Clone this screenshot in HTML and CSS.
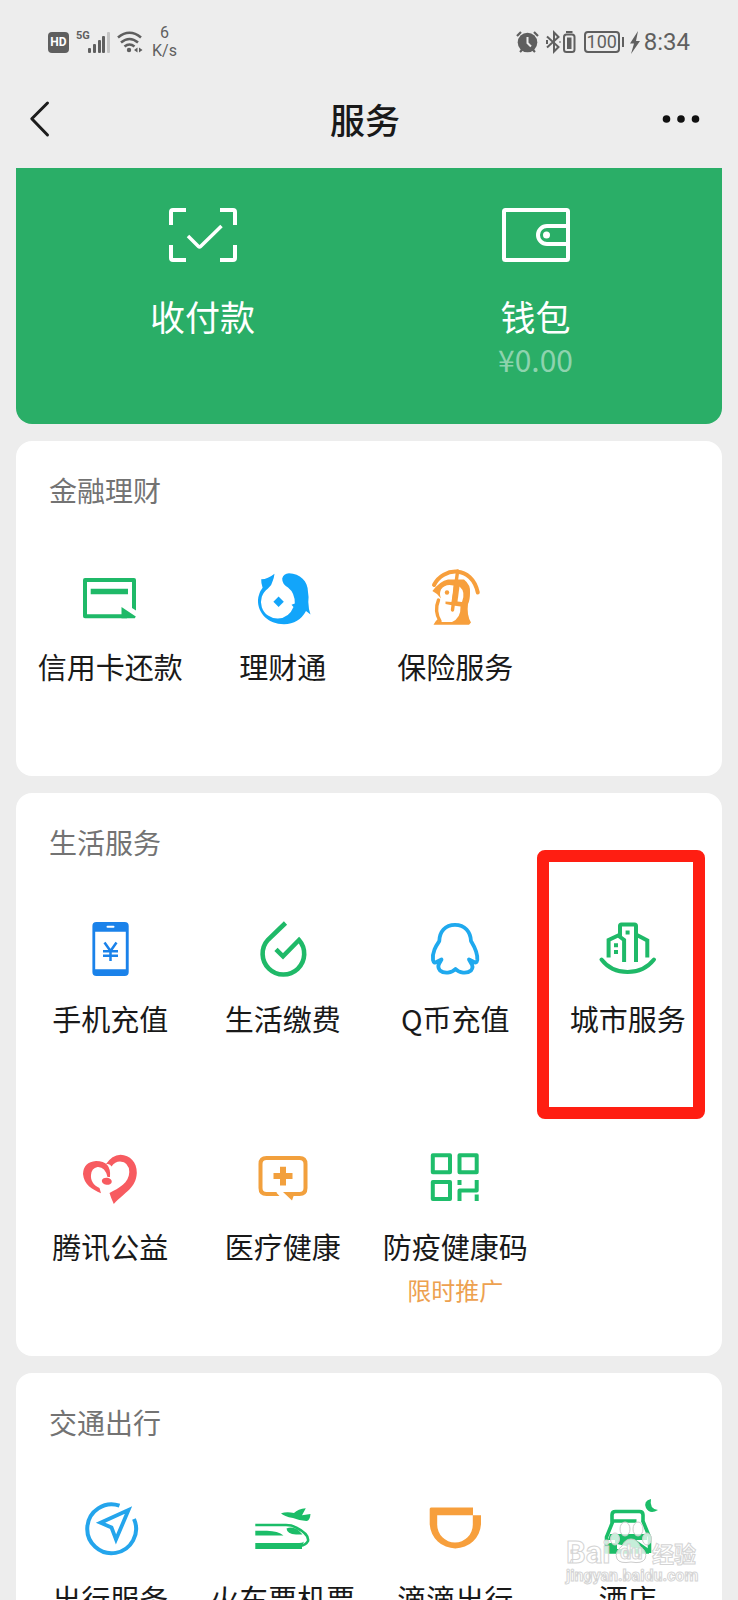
FILE: index.html
```html
<!DOCTYPE html>
<html lang="zh-CN">
<head>
<meta charset="utf-8">
<meta name="viewport" content="width=device-width, initial-scale=1">
<title>服务</title>
<link rel="stylesheet" href="styles.css">
</head>
<body>
<div class="app">
  <div class="status">
    <div class="status-group">
      <span class="hd">HD</span>
      <span class="signal">
        <span class="net">5G</span>
        <svg width="23" height="22" viewBox="0 0 23 22" fill="#5f5f5f"><rect x="0" y="17" width="3" height="5" rx="1"/><rect x="5" y="13" width="3" height="9" rx="1"/><rect x="10" y="9" width="3" height="13" rx="1"/><rect x="14" y="5" width="3" height="17" rx="1"/><rect x="19" y="1" width="3" height="21" rx="1" fill="#c4c4c4"/></svg>
      </span>
      <svg class="wifi" width="26" height="22" viewBox="0 0 26 22" fill="none" stroke="#5f5f5f" stroke-width="2.6"><path d="M1 6.5Q12.500-3 24 6.500M4 11.500q8.500-7 17 0M7.500 15.500q5-4 10 0"/><circle cx="12" cy="19" r="2.200" fill="#5f5f5f" stroke="none"/><path d="M20.500 16.500v5l-3.500-2.500zM22 16.500v5l3.500-2.500z" fill="#5f5f5f" stroke="none"/></svg>
      <span class="speed"><span>6</span><span>K/s</span></span>
    </div>
    <div class="status-group">
      <svg width="23" height="22" viewBox="0 0 23 22"><circle cx="11.500" cy="11.500" r="9.800" fill="#5f5f5f"/><path d="M1 5l4-4M22 5l-4-4M4 21l3-3M19 21l-3-3" stroke="#5f5f5f" stroke-width="2.200"/><path d="M11.500 6v6l3.500 3.500" stroke="#ededed" stroke-width="2" fill="none"/></svg>
      <svg class="bluetooth" width="30" height="22" viewBox="0 0 30 22" fill="none" stroke="#5f5f5f" stroke-width="2"><path d="M1 5.500L12.500 16 8 20.500V1.500L12.500 6 1 16.500M1 9v4M14 10.500v1"/><rect x="18" y="3.500" width="10.500" height="17.500" rx="2.500"/><path d="M20 1h6.500"/><path d="M21 6.500h4.500v11.500H21z" fill="#5f5f5f" stroke="none"/></svg>
      <span class="battery">100</span>
      <svg class="bolt" width="10" height="23" viewBox="0 0 10 23" fill="#5f5f5f"><path d="M8 0L0 12.500h4L1 23 10 10H6z"/></svg>
      <span class="clock">8:34</span>
    </div>
  </div>

  <header class="nav">
    <button class="nav-back" aria-label="返回"><svg width="20" height="36" viewBox="0 0 20 36" fill="none" stroke="#1c1c1c" stroke-width="3" stroke-linecap="round" stroke-linejoin="round"><path d="M17.500 2L1.800 17.700l15.700 16.300"/></svg></button>
    <h1 class="nav-title">服务</h1>
    <button class="nav-more" aria-label="更多"><svg width="38" height="10" viewBox="0 0 38 10" fill="#111"><circle cx="4.500" cy="5" r="3.800"/><circle cx="19" cy="5" r="3.800"/><circle cx="33.500" cy="5" r="3.800"/></svg></button>
  </header>

  <main class="content">
    <section class="pay">
      <a class="pay-item" href="#pay">
        <svg width="70" height="56" viewBox="0 0 70 56" fill="none" stroke="#fff" stroke-width="4"><path d="M3 18V5q0-2 2-2h13M52 3h13q2 0 2 2v13M3 38v13q0 2 2 2h13M52 53h13q2 0 2-2V38"/><path d="M20 29l10.500 10.500q1 1 2 0L53.500 19" stroke-width="3.500"/></svg>
        <span class="pay-label">收付款</span>
      </a>
      <a class="pay-item" href="#wallet">
        <svg width="70" height="56" viewBox="0 0 70 56" fill="none" stroke="#fff" stroke-width="4"><rect x="3" y="3" width="64" height="50" rx="1.500"/><path d="M66 19H46a9 9 0 0 0 0 18h20"/><circle cx="45.500" cy="28" r="3.500" fill="#fff" stroke="none"/></svg>
        <span class="pay-label">钱包</span>
        <span class="pay-amount">¥0.00</span>
      </a>
    </section>

    <section class="card">
      <h2 class="card-title">金融理财</h2>
      <div class="grid">
        <a class="item" href="#credit">
          <svg class="icon" viewBox="0 0 60 60"><path d="M54 40V12H5v36.300h42" fill="none" stroke="#1fb968" stroke-width="4" stroke-linejoin="round"/><path d="M10.700 20.700H48v5.600H10.700zM41.500 39l14.300 9.500-1 1.800H41.500zM52 38h4v4.500L52 40z" fill="#1fb968"/></svg>
          <span class="label">信用卡还款</span>
        </a>
        <a class="item" href="#licai">
          <svg class="icon" viewBox="0 0 60 60" fill="#12a5fa"><path d="M8.200 11.300Q15 11 21.500 5.700Q21 10 19.500 13.500Q19 17 15 20.500A16.500 16.500 0 0 0 25 50.500Q36 50 40.500 39L38.500 36.800L41.800 35.500Q42 25 35 19.500Q29 16 29.200 10.500Q30.500 5.500 36 5.300C47 5.800 55 13 55 24Q56 29 55.300 34Q55.500 41 57.500 46.500L53 43Q46 56 31 56.300C15 56 4.500 45 5 32Q5.500 25 9.600 19.700Q8 15.500 8.200 11.300z"/><path d="M25.600 28.500l5.200 5.200-5.200 5.200-5.200-5.200z"/></svg>
          <span class="label">理财通</span>
        </a>
        <a class="item" href="#insurance">
          <svg class="icon" viewBox="0 0 60 60"><path d="M9 17C18-1 47-3 52.800 24.500" fill="none" stroke="#f79f3c" stroke-width="4" stroke-linecap="round"/><path d="M7.400 23Q15 13 23 11.500L39 11.500Q46 17 45 25Q45 32 43 36Q41.500 47 46 54.500L44 56.800H8.500Q10 53 13 51L14 54H27Q36 50 35.500 38.500L28 37.500L20.500 36V33.500L26.500 34Q28 25 28.500 17.500Q20 15.500 16 21.500Q14 26 16 30.500L12 26z" fill="#f79f3c"/><path d="M34.500 18.500Q41 24 37 34L32.500 33.500z" fill="#fff"/><path d="M32.600 3L27.500 42M13.500 32Q9 43 15 53" fill="none" stroke="#f79f3c" stroke-width="3.400" stroke-linecap="round"/><circle cx="22" cy="24.500" r="2.200" fill="#f79f3c"/></svg>
          <span class="label">保险服务</span>
        </a>
      </div>
    </section>

    <section class="card">
      <h2 class="card-title">生活服务</h2>
      <div class="grid">
        <a class="item" href="#topup">
          <svg class="icon" viewBox="0 0 60 60"><rect x="12.400" y="2" width="36.300" height="54" rx="4" fill="#1a82ea"/><path d="M15.200 11.700h30.600v37.600H15.200z" fill="#fff"/><path d="M27.500 6.800h6" stroke="#fff" stroke-width="2" stroke-linecap="round"/><path d="M24.500 22.500l6 8.500 6-8.500M23 31.200h15M23 35.700h15M30.500 31v10" fill="none" stroke="#1a82ea" stroke-width="2.500"/></svg>
          <span class="label">手机充值</span>
        </a>
        <a class="item" href="#bills">
          <svg class="icon" viewBox="0 0 60 60" fill="none" stroke="#1fb968" stroke-width="4.600"><path d="M32.500 3L15 19.800A20.800 20.800 0 1 0 46 20L30 36.300l-7-7"/></svg>
          <span class="label">生活缴费</span>
        </a>
        <a class="item" href="#qcoin">
          <svg class="icon" viewBox="0 0 60 60" fill="none" stroke="#1fa9ee" stroke-width="3.800" stroke-linejoin="round"><path d="M30 4.800C20 4.800 14.500 12 14.300 21C11 26 7 32 8 40Q9 44 11.500 42L16.500 39.500L14.500 43Q12 47 15 50.500C19 54 27 53 30.500 49C34 53 42 54 46 50.500Q49 47 46 43L44 39.500L49 42Q51.500 44 52.300 40C53 32 49 26 46 21C45.500 12 40 4.800 30 4.800z"/></svg>
          <span class="label">Q币充值</span>
        </a>
        <a class="item" href="#city">
          <svg class="icon" viewBox="0 0 60 60" fill="none" stroke="#1fb968" stroke-width="4"><path d="M10.600 37.500V20l9.500-4.500 6 4.500v22M22 17V6q0-1.500 1.500-1.500h13Q38 4.500 38 6v36M38 14.500l11.300 6v17"/><path d="M3.500 39.500Q13 52 29.600 52T56 39.500" stroke-linecap="round" stroke-width="4"/><path d="M27.600 12.500h4M16 25.300h4M16 32h4"/></svg>
          <span class="label">城市服务</span>
          <span class="highlight"></span>
        </a>
        <a class="item" href="#charity">
          <svg class="icon" viewBox="0 0 60 60" fill="#f75b60"><path d="M25.800 16.300Q32 7 40.500 6.700C50 7 57 14 56.800 25C56 40 45 44 33.800 56Q31 50 29.500 45C39 40 49 35 49.300 24Q49 14 40 13.500Q35 13.500 31.500 18.500Q30 15 25.800 16.300z"/><path d="M30 29Q31.500 13 16 13Q3.500 14 3 26C4 37 12 41 21 45.300L19.500 40C13 37 10.500 32 11 27Q11.500 20 17.500 19Q25 18.500 27.500 29z"/><ellipse cx="26.800" cy="33.300" rx="5" ry="3.500" transform="rotate(8 26.800 33.300)"/></svg>
          <span class="label">腾讯公益</span>
        </a>
        <a class="item" href="#medical">
          <svg class="icon" viewBox="0 0 60 60"><path d="M23.500 46H13.500Q7.500 46 7.500 40V16Q7.500 10 13.500 10h33Q52.500 10 52.500 16v24Q52.500 46 46.500 46H37" fill="none" stroke="#f2a03d" stroke-width="4"/><path d="M30 44h12l-3 8.500zM20 44.200h3l3.500 3.800H20zM27 18.700h6v6.300h6.500v6H33v6.500h-6V31h-6.500v-6H27z" fill="#f2a03d"/></svg>
          <span class="label">医疗健康</span>
        </a>
        <a class="item" href="#health-code">
          <svg class="icon" viewBox="0 0 60 60" fill="none" stroke="#1fbd6b" stroke-width="4" stroke-linejoin="round"><path d="M7.800 7.300H25v17H7.800zM34.500 7.300h17.200v17H34.500zM7.800 34H25v17H7.800zM34.500 32v5M51.700 32v10.500H34.500V53M51.700 46.500V53"/></svg>
          <span class="label">防疫健康码</span>
          <span class="promo">限时推广</span>
        </a>
      </div>
    </section>

    <section class="card">
      <h2 class="card-title">交通出行</h2>
      <div class="grid">
        <a class="item" href="#travel">
          <svg class="icon" viewBox="0 0 60 60" fill="none" stroke="#24a5ec" stroke-width="4"><path d="M39.500 5.700A24.400 24.400 0 1 0 54 19"/><path d="M48.500 10L20.500 22.700 31.500 27.500 36 39.500z" stroke-width="3.800"/></svg>
          <span class="label">出行服务</span>
        </a>
        <a class="item" href="#tickets">
          <svg class="icon" viewBox="0 0 60 60" fill="#1bbd68"><path d="M2.300 43H43q7 0 8-1.500L49 46.500V49H2.300zM2.300 30.700H14Q25 31 30.500 35.500H2.300z"/><path d="M2.300 25H33Q39 25 43 27.500C50 31 56 36 55 41Q53 45 47 46" fill="none" stroke="#1bbd68" stroke-width="2.600"/><path d="M33.500 28.500Q42 25 49.500 34.500H43Q34 34 33.500 28.500zM28 13.200Q34 11.500 41 13Q45 9 52.800 8.300L49 15.300L57.500 14Q57 20.500 53.500 21Q46 20.500 40 18Q31 16.500 28 13.200z"/></svg>
          <span class="label">火车票机票</span>
        </a>
        <a class="item" href="#didi">
          <svg class="icon" viewBox="0 0 60 60"><path d="M6 7.500h42v7.800h8v9a25.700 25.700 0 0 1-51.300 0V9q0-1.500 1.300-1.500zM12.200 15.200v9.500a17.800 17.800 0 0 0 35.600 0v-9.500z" fill="#f79f3c" fill-rule="evenodd"/></svg>
          <span class="label">滴滴出行</span>
        </a>
        <a class="item" href="#hotel">
          <svg class="icon" viewBox="0 0 60 60"><path d="M14 23V15q0-3.500 3.500-3.500h24q3.500 0 3.500 3.500v6M15 21h23.500M15 21L8.500 37v16M44.500 20L51.500 37v16" fill="none" stroke="#1bbd68" stroke-width="3.600"/><path d="M12 34h37v6H38l13 9v4.800H7V43h10v-3h-7zM19 44v5h22z" fill="#1bbd68"/><path d="M53-1Q45 1 48 8Q52 15 60 10Q51 9 53-1z" fill="#1bbd68"/></svg>
          <span class="label">酒店</span>
        </a>
      </div>
    </section>
  </main>

  <div class="watermark">
    <svg class="paw" width="42" height="46" viewBox="0 0 42 46" fill="#fff" fill-opacity=".75" stroke="#ccc" stroke-width="1"><ellipse cx="15" cy="9" rx="5" ry="7"/><ellipse cx="28" cy="9" rx="5" ry="7"/><ellipse cx="5" cy="19" rx="4.500" ry="6"/><ellipse cx="37" cy="19" rx="4.500" ry="6"/><path d="M21 19q6 0 9 7 8 6 5 13-3 5-14 3-11 2-14-3-3-7 5-13 3-7 9-7z"/></svg>
    <div class="wm-top"><span class="wm-bai">Bai</span><span class="wm-du">du</span><span class="wm-cn">经验</span></div>
    <div class="wm-url">jingyan.baidu.com</div>
  </div>
</div>
</body>
</html>
```
FILE: styles.css
```css
* {
  box-sizing: border-box;
}

body {
  margin: 0;
  background: #ededed;
  color: #191919;
  font-family: "Noto Sans CJK SC", sans-serif;
}

a {
  color: inherit;
  text-decoration: none;
}

svg {
  display: block;
  flex: none;
  overflow: visible;
}

.app {
  position: relative;
  display: flex;
  flex-direction: column;
  height: 100vh;
  overflow: hidden;
}

/* Status bar */
.status {
  display: flex;
  justify-content: space-between;
  flex: none;
  height: 84px;
  padding: 0 48px;
  color: #5f5f5f;
  font-family: Roboto, sans-serif;
}

.status-group {
  display: flex;
  align-items: center;
}

.hd {
  width: 21px;
  border-radius: 4px;
  background: #5f5f5f;
  color: #fff;
  font-size: 12px;
  font-weight: 700;
  line-height: 21px;
  text-align: center;
}

.signal {
  display: flex;
  align-items: flex-start;
  margin-left: 7px;
}

.net {
  width: 12px;
  font-size: 11px;
  font-weight: 700;
  line-height: 10px;
}

.wifi {
  margin-left: 6px;
}

.speed {
  display: flex;
  flex-direction: column;
  align-items: center;
  margin-left: 9px;
  font-size: 16px;
  line-height: 18px;
}

.bluetooth {
  margin-left: 7px;
}

.battery {
  position: relative;
  width: 36px;
  margin-left: 8px;
  border: 2px solid #5f5f5f;
  border-radius: 4px;
  font-size: 18px;
  line-height: 18px;
  text-align: center;
}

.battery::after {
  content: "";
  position: absolute;
  top: 4px;
  right: -6px;
  width: 2px;
  height: 10px;
  background: #5f5f5f;
}

.bolt {
  margin-left: 10px;
}

.clock {
  margin-left: 4px;
  font-size: 24px;
  line-height: 28px;
}

/* Title bar */
.nav {
  display: flex;
  align-items: center;
  flex: none;
  height: 84px;
  padding-bottom: 14px;
}

.nav-back,
.nav-more {
  display: flex;
  align-items: center;
  height: 64px;
  border: 0;
  background: none;
}

.nav-back {
  width: 80px;
  padding: 0 0 0 30px;
}

.nav-more {
  justify-content: flex-end;
  width: 88px;
  padding: 0 38px 0 0;
}

.nav-title {
  flex: 1;
  margin: 0;
  font-size: 35px;
  font-weight: 500;
  line-height: 48px;
  text-align: center;
}

/* Cards */
.content {
  display: flex;
  flex: 1;
  flex-direction: column;
  gap: 17px;
  min-height: 0;
  padding: 0 16px;
  overflow: hidden;
}

.pay {
  display: grid;
  grid-template-columns: 1fr 1fr;
  flex: none;
  height: 256px;
  padding: 39px 20px 0;
  border-radius: 0 0 16px 16px;
  background: #2aae67;
  color: #fff;
}

.pay-item {
  display: flex;
  flex-direction: column;
  align-items: center;
}

.pay-label {
  margin-top: 29px;
  font-size: 35px;
  font-weight: 400;
  line-height: 48px;
}

.pay-amount {
  color: #8ed3ae;
  font-size: 30px;
  line-height: 38px;
}

.card {
  flex: none;
  border-radius: 16px;
  background: #fff;
}

.card-title {
  margin: 0;
  padding: 29px 33px 38px;
  color: #737373;
  font-size: 28px;
  font-weight: 400;
  line-height: 40px;
}

.grid {
  display: grid;
  grid-template-columns: repeat(4, 1fr);
  grid-auto-rows: 228px;
  padding: 0 8px;
}

.item {
  position: relative;
  display: flex;
  flex-direction: column;
  align-items: center;
  padding-top: 20px;
  white-space: nowrap;
}

.icon {
  width: 60px;
  height: 60px;
}

.label {
  margin-top: 18px;
  font-size: 29px;
  line-height: 40px;
}

.promo {
  margin-top: 8px;
  color: #eda150;
  font-size: 24px;
  line-height: 32px;
}

.highlight {
  position: absolute;
  top: -50px;
  right: 9px;
  bottom: 9px;
  left: -5px;
  border: 12px solid #ff1e12;
  border-radius: 8px;
}

/* Watermark */
.watermark {
  position: absolute;
  right: 38px;
  bottom: 14px;
  width: 134px;
  color: rgba(255, 255, 255, 0.8);
  font-family: Roboto, "Noto Sans CJK SC", sans-serif;
  font-weight: 700;
  -webkit-text-stroke: 1px #d4d4d4;
}

.paw {
  position: absolute;
  top: -18px;
  left: 44px;
}

.wm-top {
  position: relative;
  display: flex;
  align-items: center;
  height: 28px;
}

.wm-bai {
  width: 54px;
  font-size: 31px;
}

.wm-du {
  width: 32px;
  font-size: 20px;
}

.wm-cn {
  font-size: 22px;
}

.wm-url {
  font-size: 16px;
  line-height: 20px;
}
```
